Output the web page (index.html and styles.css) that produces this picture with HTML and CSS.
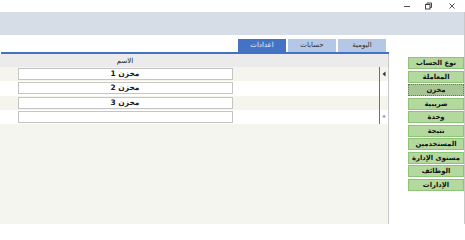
FILE: index.html
```html
<!DOCTYPE html>
<html lang="ar">
<head>
<meta charset="utf-8">
<link rel="stylesheet" href="styles.css">
</head>
<body dir="rtl">
<div class="window">
  <div class="titlebar">
    <span class="ctl ctl-min"><svg width="8" height="10" viewBox="0 0 8 10"><line x1="1" y1="5.5" x2="7" y2="5.5" stroke="#555" stroke-width="1"/></svg></span>
    <span class="ctl"><svg width="8" height="10" viewBox="0 0 8 10"><rect x="1.5" y="3.5" width="4.5" height="4.5" fill="none" stroke="#444" stroke-width="1"/><path d="M3 3.5V2h4.5v4.5H6" fill="none" stroke="#444" stroke-width="1"/></svg></span>
    <span class="ctl"><svg width="8" height="10" viewBox="0 0 8 10"><path d="M1.5 2.5l5 5M6.5 2.5l-5 5" stroke="#555" stroke-width="1"/></svg></span>
  </div>
  <div class="toolbar"></div>
  <div class="main">
    <div class="side">
      <div class="btn">نوع الحساب</div>
      <div class="btn">المعاملة</div>
      <div class="btn btn-active">مخزن</div>
      <div class="btn">ضريبية</div>
      <div class="btn">وحدة</div>
      <div class="btn">نتيجة</div>
      <div class="btn">المستخدمين</div>
      <div class="btn">مستوى الإدارة</div>
      <div class="btn">الوظائف</div>
      <div class="btn">الإدارات</div>
    </div>
    <div class="content">
      <div class="tabs">
        <div class="tab">اليومية</div>
        <div class="tab">حسابات</div>
        <div class="tab tab-active">اعدادات</div>
      </div>
      <div class="rule"></div>
      <div class="sheet">
        <div class="row head">
          <div class="sel"></div>
          <div class="gap"></div>
          <div class="cell head-cell">الاسم</div>
          <div class="pad"></div>
        </div>
        <div class="row alt">
          <div class="sel sel-line"><svg width="4" height="6" viewBox="0 0 4 6"><path d="M0.5 3L3.5 0.5v5z" fill="#333"/></svg></div>
          <div class="gap"></div>
          <div class="cell"><div class="box">مخزن 1</div></div>
          <div class="pad"></div>
        </div>
        <div class="row">
          <div class="sel sel-line"></div>
          <div class="gap"></div>
          <div class="cell"><div class="box">مخزن 2</div></div>
          <div class="pad"></div>
        </div>
        <div class="row alt">
          <div class="sel sel-line"></div>
          <div class="gap"></div>
          <div class="cell"><div class="box">مخزن 3</div></div>
          <div class="pad"></div>
        </div>
        <div class="row">
          <div class="sel sel-line"><span class="star">*</span></div>
          <div class="gap"></div>
          <div class="cell"><div class="box"></div></div>
          <div class="pad"></div>
        </div>
      </div>
    </div>
  </div>
</div>
</body>
</html>
```

FILE: styles.css
```css
html, body {
  margin: 0;
  padding: 0;
  background: #ffffff;
}
body {
  font-family: "DejaVu Sans", sans-serif;
  color: #1a1a1a;
}
.window {
  width: 465px;
  height: 224px;
  display: flex;
  flex-direction: column;
  overflow: hidden;
}
.titlebar {
  height: 12px;
  display: flex;
  direction: ltr;
  justify-content: flex-end;
  padding-right: 1px;
  background: #ffffff;
}
.ctl {
  width: 24px;
  height: 12px;
  display: flex;
  align-items: center;
  justify-content: center;
}
.ctl-min {
  width: 18px;
}
.toolbar {
  height: 23px;
  background: #d7dde6;
  border-right: 1px solid #c9c9c9;
}
.main {
  flex: 1;
  display: flex;
  min-height: 0;
}
.side {
  width: 75px;
  border-right: 1px solid #c9c9c9;
  padding-top: 22px;
  display: flex;
  flex-direction: column;
  align-items: flex-start;
  gap: 1.5px;
  background: #ffffff;
}
.btn {
  width: 54px;
  height: 10px;
  border: 1px solid #8cc476;
  background: #b3d99f;
  font-size: 6.8px;
  font-weight: bold;
  line-height: 10px;
  text-align: center;
  white-space: nowrap;
  color: #111;
}
.btn-active {
  background: #a7c595;
  border: 1px dotted #5f7f52;
}
.content {
  flex: 1;
  display: flex;
  flex-direction: column;
  min-width: 0;
}
.tabs {
  height: 13px;
  padding-top: 4px;
  padding-right: 3px;
  display: flex;
  gap: 2px;
}
.tab {
  width: 48px;
  height: 13px;
  background: #b4c7e7;
  color: #333;
  font-size: 7px;
  line-height: 13px;
  text-align: center;
}
.tab-active {
  background: #4472c4;
  color: #eef2fa;
}
.rule {
  height: 2px;
  background: #4472c4;
  margin-left: 1px;
}
.sheet {
  flex: 1;
  background: #f5f5ef;
  border-right: 1px solid #c9c9c9;
}
.row {
  display: flex;
  height: 14.3px;
  background: #ffffff;
}
.row.alt {
  background: #f5f5ed;
}
.row.head {
  height: 13px;
  background: #ebebeb;
}
.sel {
  width: 9px;
  display: flex;
  align-items: center;
  justify-content: center;
}
.sel-line {
  border-left: 1px solid #707070;
  width: 8px;
}
.star {
  font-size: 7px;
  color: #666;
  line-height: 1;
  padding-top: 2px;
}
.gap {
  width: 146px;
}
.cell {
  width: 216px;
  display: flex;
  align-items: center;
  justify-content: center;
}
.head-cell {
  font-size: 7px;
  color: #222;
}
.box {
  width: 213px;
  height: 10px;
  border: 1px solid #c4c4c4;
  background: #ffffff;
  font-size: 7.5px;
  font-weight: bold;
  line-height: 10px;
  text-align: center;
}
.pad {
  flex: 1;
}
```
